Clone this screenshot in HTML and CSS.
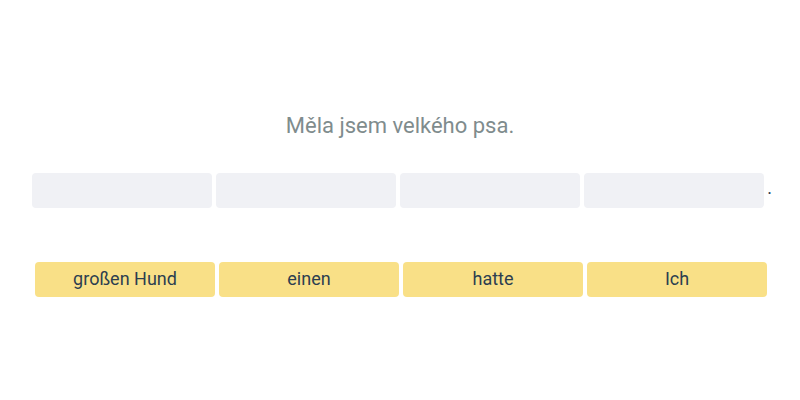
FILE: index.html
```html
<!DOCTYPE html>
<html lang="cs">
<head>
    <meta charset="UTF-8">
    <meta name="viewport" content="width=device-width, initial-scale=1.0">
    <title>Sentence Builder</title>
    <link rel="stylesheet" href="styles.css">
</head>
<body>
    <div class="exercise">
        <p class="prompt">Měla jsem velkého psa.</p>

        <div class="answer-row">
            <div class="slot"></div>
            <div class="slot"></div>
            <div class="slot"></div>
            <div class="slot"></div>
            <span class="period">.</span>
        </div>

        <div class="word-bank">
            <button class="word">großen Hund</button>
            <button class="word">einen</button>
            <button class="word">hatte</button>
            <button class="word">Ich</button>
        </div>
    </div>
</body>
</html>
```

FILE: styles.css
```css
body {
    font-family: Roboto, 'Noto Sans', sans-serif;
    margin: 0;
    background-color: #ffffff;
}
.exercise {
    padding-top: 111px;
}
.prompt {
    margin: 0;
    text-align: center;
    font-size: 22px;
    line-height: 30px;
    color: #7f8c8d;
}
.answer-row {
    display: flex;
    justify-content: center;
    align-items: center;
    gap: 4px;
    margin-top: 32px;
    padding-left: 4px;
}
.slot {
    width: 180px;
    height: 35px;
    background-color: #f0f1f5;
    border-radius: 4px;
}
.period {
    font-size: 18px;
    color: #2c3e50;
    margin-left: -1px;
    margin-top: -6px;
}
.word-bank {
    display: flex;
    justify-content: center;
    gap: 4px;
    margin-top: 54px;
    padding-left: 2px;
}
.word {
    width: 180px;
    height: 35px;
    background-color: #f9e087;
    color: #2c3e50;
    border: none;
    border-radius: 4px;
    font-family: Roboto, 'Noto Sans', sans-serif;
    font-size: 18px;
    cursor: pointer;
    padding: 0 0 3px;
}
```
